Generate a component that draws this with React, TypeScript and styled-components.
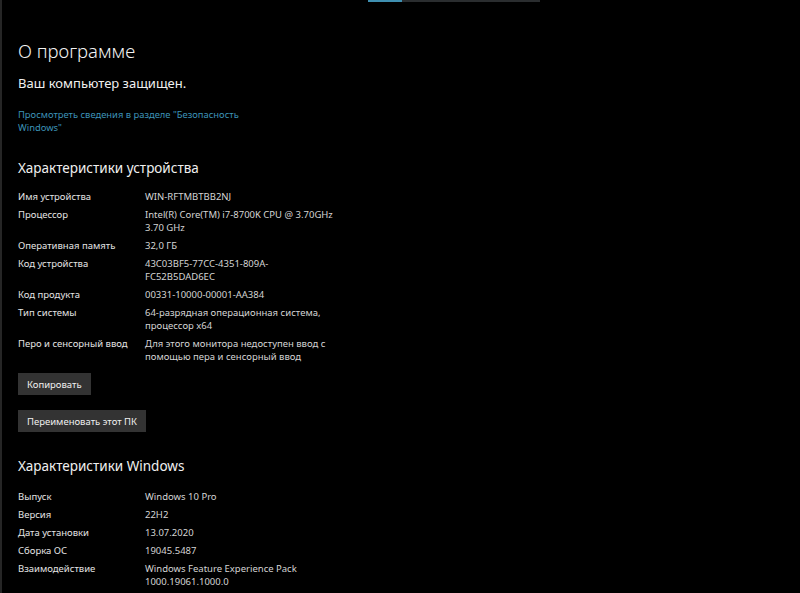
import React from 'react';
import styled, { createGlobalStyle } from 'styled-components';

const GlobalStyle = createGlobalStyle`
  html, body {
    margin: 0;
    padding: 0;
    background: #000;
  }
  body {
    font-family: 'Noto Sans', 'Open Sans', sans-serif;
    color: #e6e6e6;
  }
`;

type Row = { label: string; value: string[] };

const deviceRows: Row[] = [
  { label: 'Имя устройства', value: ['WIN-RFTMBTBB2NJ'] },
  { label: 'Процессор', value: ['Intel(R) Core(TM) i7-8700K CPU @ 3.70GHz', '3.70 GHz'] },
  { label: 'Оперативная память', value: ['32,0 ГБ'] },
  { label: 'Код устройства', value: ['43C03BF5-77CC-4351-809A-', 'FC52B5DAD6EC'] },
  { label: 'Код продукта', value: ['00331-10000-00001-AA384'] },
  { label: 'Тип системы', value: ['64-разрядная операционная система,', 'процессор x64'] },
  { label: 'Перо и сенсорный ввод', value: ['Для этого монитора недоступен ввод с', 'помощью пера и сенсорный ввод'] },
];

const windowsRows: Row[] = [
  { label: 'Выпуск', value: ['Windows 10 Pro'] },
  { label: 'Версия', value: ['22H2'] },
  { label: 'Дата установки', value: ['13.07.2020'] },
  { label: 'Сборка ОС', value: ['19045.5487'] },
  { label: 'Взаимодействие', value: ['Windows Feature Experience Pack', '1000.19061.1000.0'] },
];

function SpecTable({ rows, top }: { rows: Row[]; top: number }) {
  return (
    <SpecList $top={top}>
      {rows.map((r) => (
        <SpecRow key={r.label}>
          <SpecLabel>{r.label}</SpecLabel>
          <SpecValue>
            {r.value.map((v) => (
              <div key={v}>{v}</div>
            ))}
          </SpecValue>
        </SpecRow>
      ))}
    </SpecList>
  );
}

export default function App() {
  return (
    <>
      <GlobalStyle />
      <Page>
        <ScrollStrip>
          <ScrollTrack>
            <ScrollThumb />
          </ScrollTrack>
        </ScrollStrip>
        <Content>
          <Title>О программе</Title>
          <Protected>Ваш компьютер защищен.</Protected>
          <Link>
            Просмотреть сведения в разделе "Безопасность
            <br />
            Windows"
          </Link>

          <SectionTitle $top={24}>Характеристики устройства</SectionTitle>
          <SpecTable rows={deviceRows} top={12} />

          <ButtonStack>
            <Button>Копировать</Button>
            <Button>Переименовать этот ПК</Button>
          </ButtonStack>

          <SectionTitle $top={24}>Характеристики Windows</SectionTitle>
          <SpecTable rows={windowsRows} top={14} />
        </Content>
      </Page>
    </>
  );
}

const Page = styled.div`
  width: 800px;
  height: 593px;
  overflow: hidden;
  background: #000;
  border-left: 2px solid #262626;
  box-sizing: border-box;
  display: flex;
  flex-direction: column;
`;

const ScrollStrip = styled.div`
  height: 2px;
  padding-left: 366px;
  display: flex;
`;

const ScrollTrack = styled.div`
  width: 172px;
  height: 2px;
  background: #2a2d2f;
  display: flex;
`;

const ScrollThumb = styled.div`
  width: 34px;
  height: 2px;
  background: #3f8fb0;
`;

const Content = styled.div`
  padding: 36px 0 0 16px;
  display: flex;
  flex-direction: column;
  align-items: flex-start;
`;

const Title = styled.div`
  font-size: 18.5px;
  font-weight: 300;
  line-height: 26px;
  color: #f2f2f2;
`;

const Protected = styled.div`
  margin-top: 9px;
  font-size: 13px;
  line-height: 20px;
  color: #f0f0f0;
`;

const Link = styled.div`
  margin-top: 15px;
  font-size: 9.4px;
  line-height: 13px;
  color: #3d93b8;
`;

const SectionTitle = styled.div<{ $top: number }>`
  margin-top: ${({ $top }) => $top}px;
  font-size: 13.5px;
  line-height: 20px;
  color: #f0f0f0;
`;

const SpecList = styled.div<{ $top: number }>`
  margin-top: ${({ $top }) => $top}px;
  display: flex;
  flex-direction: column;
  gap: 5px;
`;

const SpecRow = styled.div`
  display: flex;
  font-size: 9.5px;
  line-height: 13px;
`;

const SpecLabel = styled.div`
  width: 127px;
  color: #e4e4e4;
`;

const SpecValue = styled.div`
  color: #d4d4d4;
`;

const ButtonStack = styled.div`
  margin-top: 10px;
  display: flex;
  flex-direction: column;
  align-items: flex-start;
  gap: 15px;
`;

const Button = styled.div`
  height: 22px;
  padding: 0 9px;
  display: flex;
  align-items: center;
  background: #333333;
  color: #f0f0f0;
  font-size: 9.5px;
`;
